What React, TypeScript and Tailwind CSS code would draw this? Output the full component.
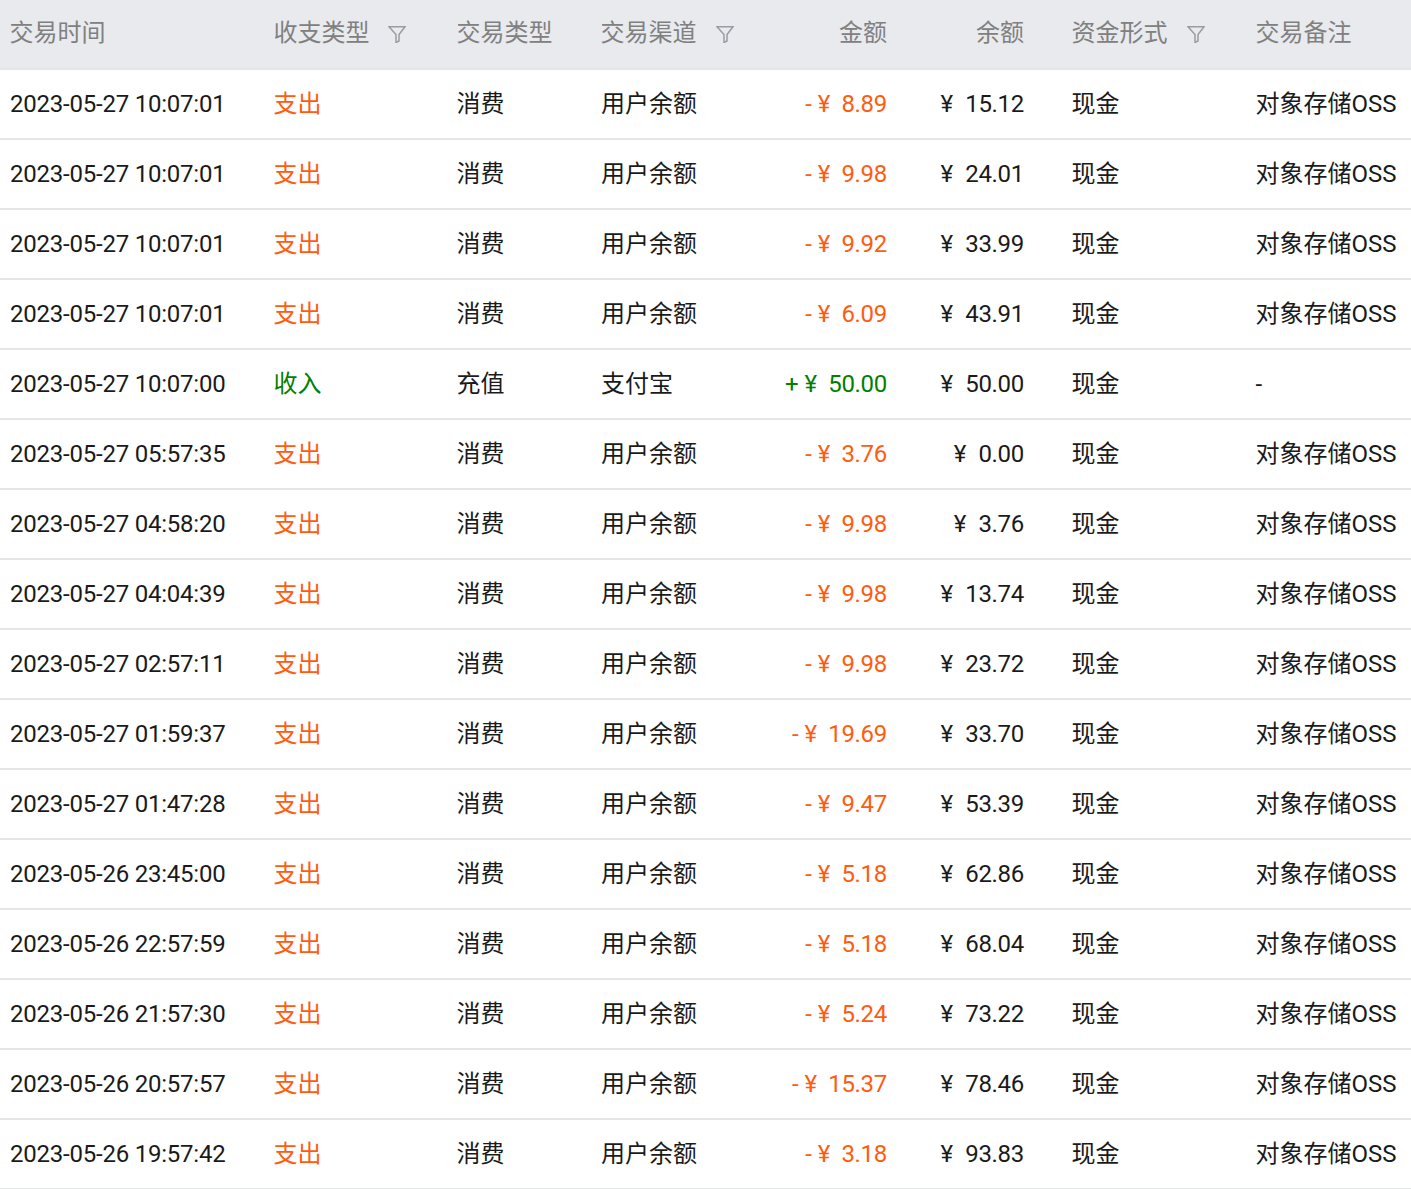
import React from "react";

type Row = {
  time: string;
  income?: boolean;
  amount: string;
  balance: string;
};

const rows: Row[] = [
  { time: "2023-05-27 10:07:01", amount: "8.89", balance: "15.12" },
  { time: "2023-05-27 10:07:01", amount: "9.98", balance: "24.01" },
  { time: "2023-05-27 10:07:01", amount: "9.92", balance: "33.99" },
  { time: "2023-05-27 10:07:01", amount: "6.09", balance: "43.91" },
  { time: "2023-05-27 10:07:00", income: true, amount: "50.00", balance: "50.00" },
  { time: "2023-05-27 05:57:35", amount: "3.76", balance: "0.00" },
  { time: "2023-05-27 04:58:20", amount: "9.98", balance: "3.76" },
  { time: "2023-05-27 04:04:39", amount: "9.98", balance: "13.74" },
  { time: "2023-05-27 02:57:11", amount: "9.98", balance: "23.72" },
  { time: "2023-05-27 01:59:37", amount: "19.69", balance: "33.70" },
  { time: "2023-05-27 01:47:28", amount: "9.47", balance: "53.39" },
  { time: "2023-05-26 23:45:00", amount: "5.18", balance: "62.86" },
  { time: "2023-05-26 22:57:59", amount: "5.18", balance: "68.04" },
  { time: "2023-05-26 21:57:30", amount: "5.24", balance: "73.22" },
  { time: "2023-05-26 20:57:57", amount: "15.37", balance: "78.46" },
  { time: "2023-05-26 19:57:42", amount: "3.18", balance: "93.83" },
];

function FilterIcon() {
  return (
    <svg width="18" height="18" viewBox="0 0 18 18" fill="none" stroke="#9a9ca1" strokeWidth="1.5" className="mt-px shrink-0">
      <path d="M1 1.75h16L11 9.5v6.5l-3 1.5V9.5z" />
    </svg>
  );
}

function Head({ label, gap }: { label: string; gap: string }) {
  return (
    <span className={"flex items-center " + gap}>
      <span className="mb-px">{label}</span>
      <FilterIcon />
    </span>
  );
}

export default function App() {
  return (
    <div className="w-[1411px] bg-white font-['Roboto','Noto_Sans_CJK_SC',sans-serif] text-2xl text-[#1a1a1a]">
      <table className="w-full table-fixed border-collapse">
        <colgroup>
          <col className="w-[264px]" />
          <col className="w-[183px]" />
          <col className="w-[144px]" />
          <col className="w-[170px]" />
          <col className="w-[137px]" />
          <col className="w-[164px]" />
          <col className="w-[184px]" />
          <col className="w-[165px]" />
        </colgroup>
        <thead>
          <tr className="h-[69px] border-b-2 border-[#e5e6ea] bg-[#e9eaee] text-left text-[#808080]">
            <th className="pb-[2px] pl-[9.5px] font-normal">交易时间</th>
            <th className="pb-[2px] pl-[9.5px] font-normal"><Head label="收支类型" gap="gap-[18px]" /></th>
            <th className="pb-[2px] pl-[9.5px] font-normal">交易类型</th>
            <th className="pb-[2px] pl-[9.5px] font-normal"><Head label="交易渠道" gap="gap-[19px]" /></th>
            <th className="pb-[2px] pr-[11px] text-right font-normal">金额</th>
            <th className="pb-[2px] pr-[38px] text-right font-normal">余额</th>
            <th className="pb-[2px] pl-[9.5px] font-normal"><Head label="资金形式" gap="gap-[19px]" /></th>
            <th className="pb-[2px] pl-[9.5px] font-normal">交易备注</th>
          </tr>
        </thead>
        <tbody>
          {rows.map((r, i) => (
            <tr key={i} className="h-[70px] border-b-2 border-[#e5e6ea]">
              <td className="whitespace-nowrap pl-2.5 tracking-[-0.22px]">{r.time}</td>
              <td className={"pl-[9.5px] " + (r.income ? "text-[#008000]" : "text-[#ff5c0f]")}>{r.income ? "收入" : "支出"}</td>
              <td className="pl-[9.5px]">{r.income ? "充值" : "消费"}</td>
              <td className="pl-2.5">{r.income ? "支付宝" : "用户余额"}</td>
              <td className={"whitespace-nowrap pr-[11px] text-right " + (r.income ? "text-[#008000]" : "text-[#ff5c0f]")}>
                <span className="mr-1.5">{r.income ? "+" : "-"}</span>
                <span className="mr-[11px]">¥</span>
                <span className="tracking-[-0.3px]">{r.amount}</span>
              </td>
              <td className="whitespace-nowrap pr-[38px] text-right">
                <span className="mr-3">¥</span>
                <span className="tracking-[-0.3px]">{r.balance}</span>
              </td>
              <td className="pl-[9.5px]">现金</td>
              <td className="whitespace-nowrap pl-[9.5px]">{r.income ? "-" : "对象存储OSS"}</td>
            </tr>
          ))}
        </tbody>
      </table>
    </div>
  );
}
